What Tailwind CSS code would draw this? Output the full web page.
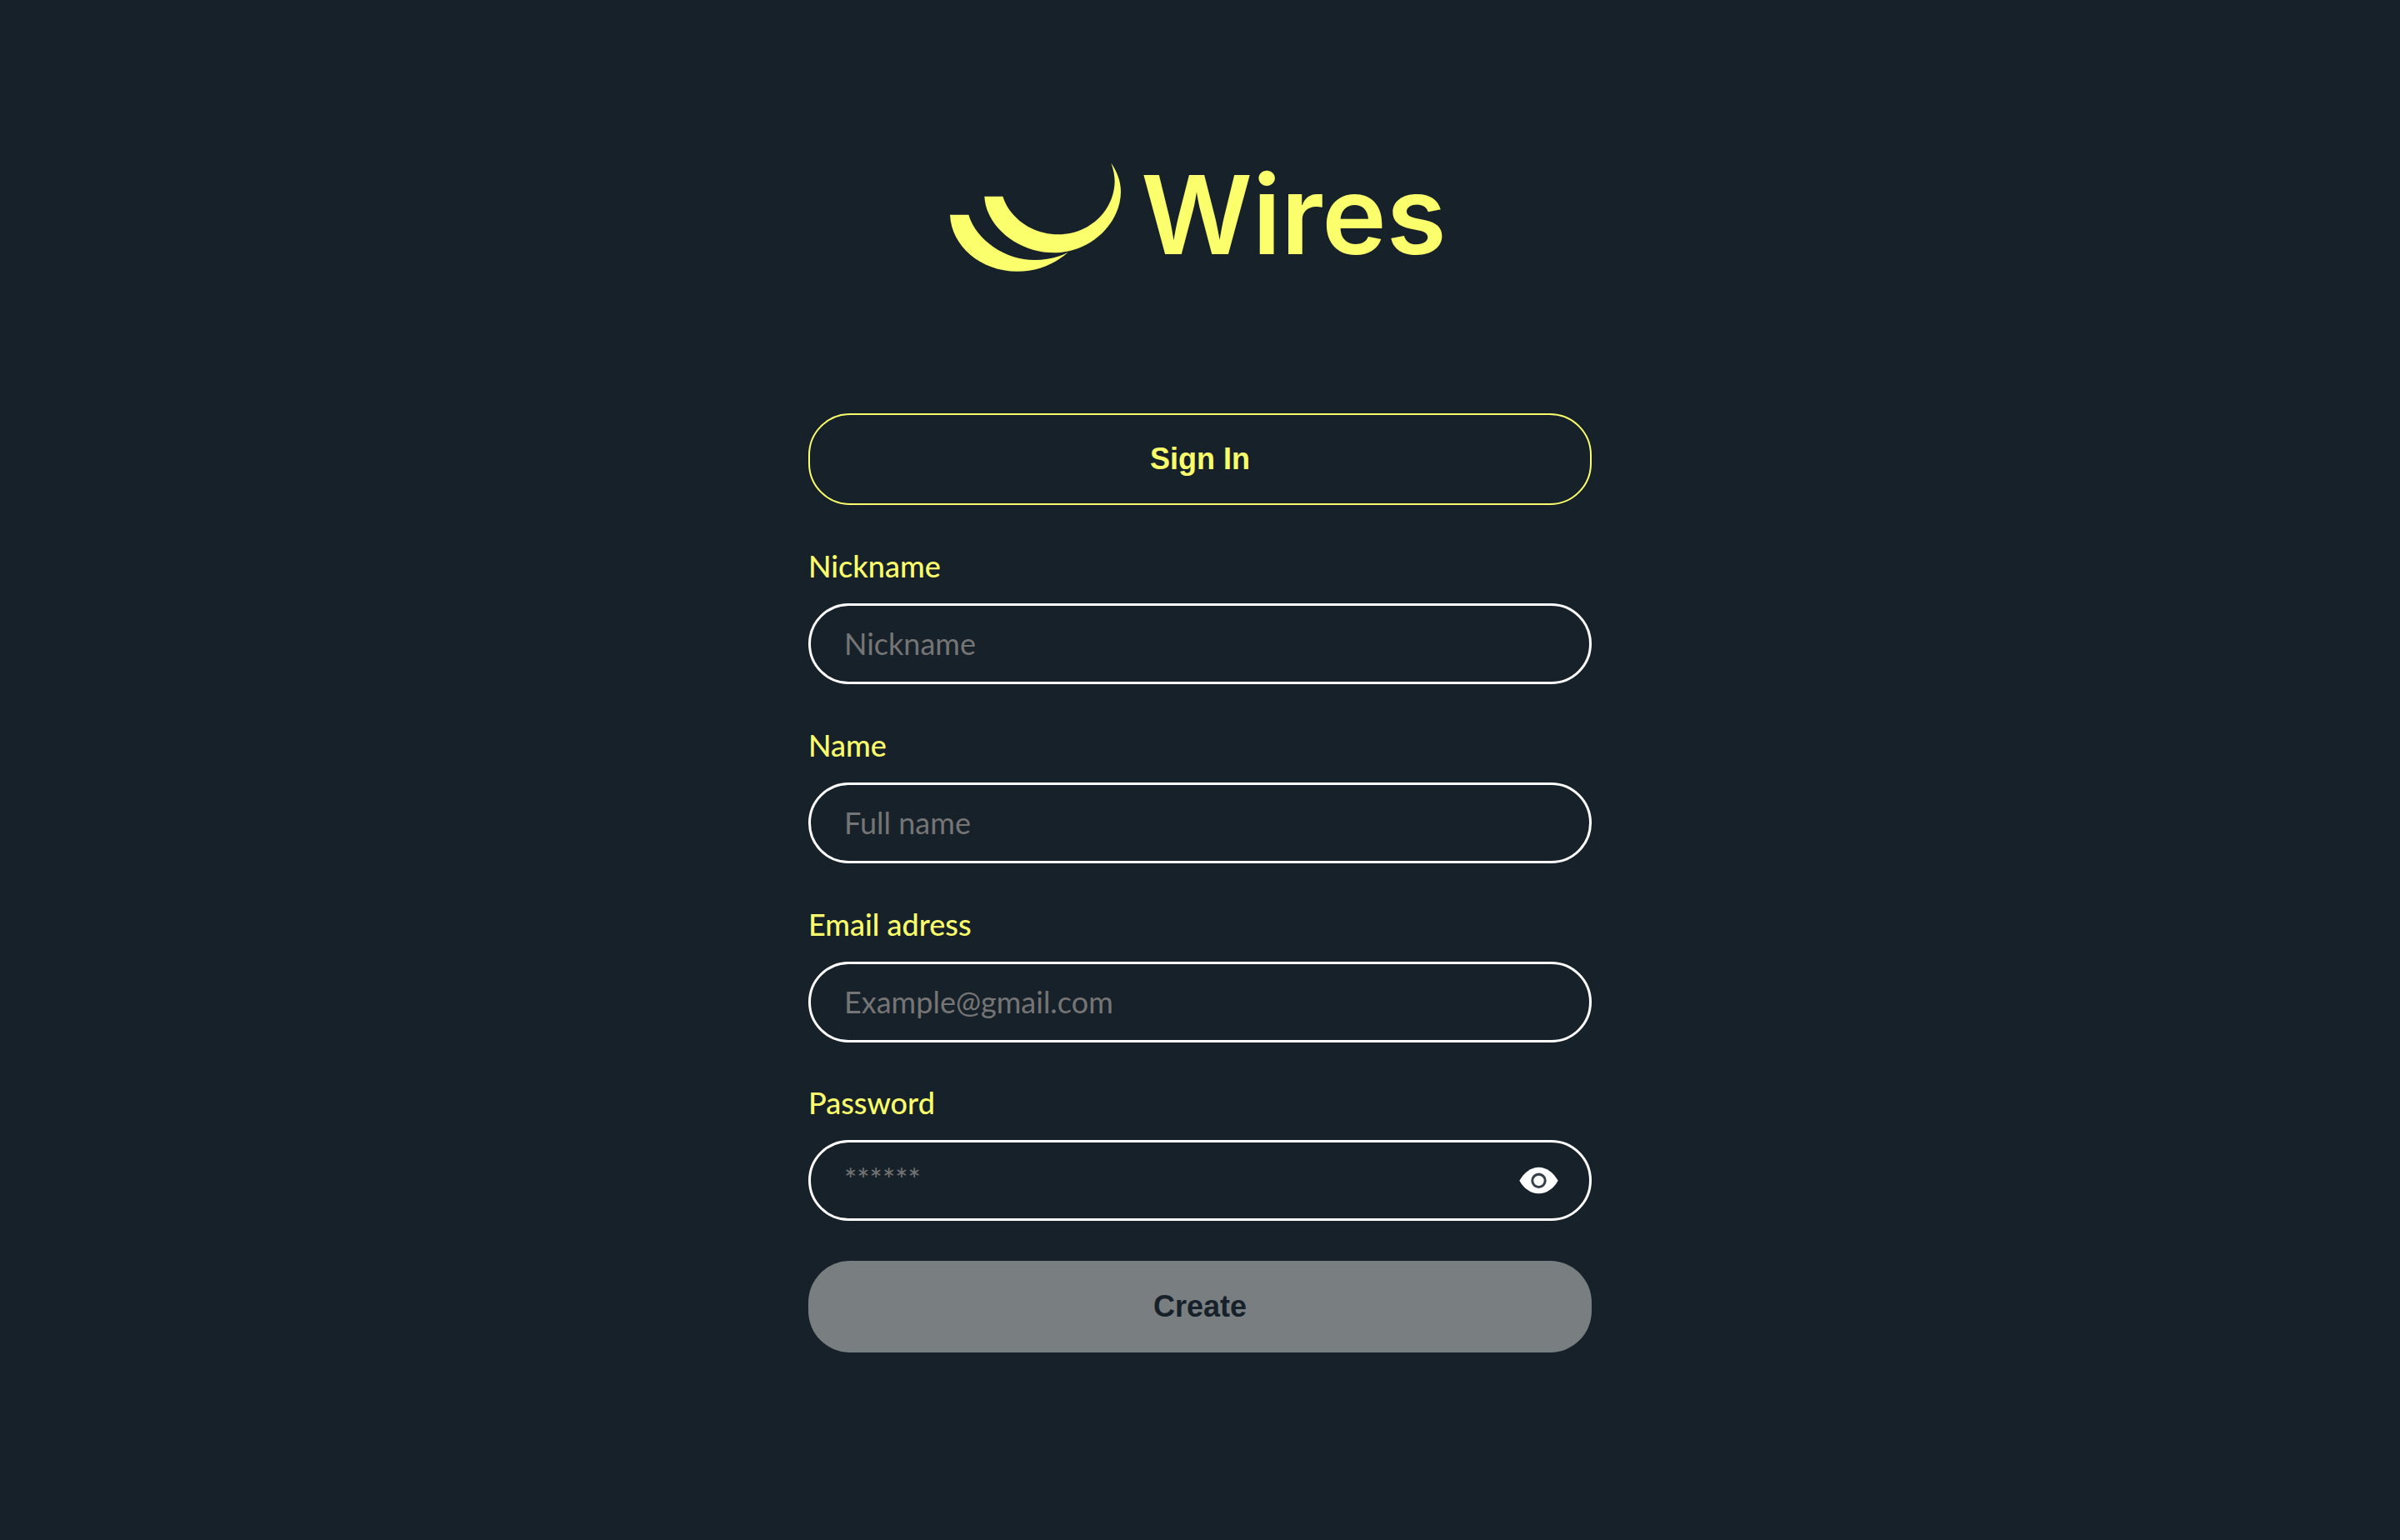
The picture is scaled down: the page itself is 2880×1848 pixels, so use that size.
<!DOCTYPE html>
<html lang="en">
<head>
<meta charset="utf-8">
<meta name="viewport" content="width=device-width, initial-scale=1">
<title>Wires - Create account</title>
<script src="https://cdn.jsdelivr.net/npm/@tailwindcss/browser@4"></script>
</head>
<body class="min-h-screen bg-[#17212a] font-['Lato',sans-serif] text-4xl leading-[43px] text-[#fbff6b]">
<main class="mx-auto flex w-full max-w-[940px] flex-col pt-[195px] pb-24">
  <h1 class="flex h-[131px] items-start justify-center gap-6 pr-1">
    <svg class="h-[131px] w-[205px] shrink-0" viewBox="60 45 615 393" fill="#fbff6b" aria-hidden="true">
      <path d="M184 167H250C275 245 355 304 450 304C555 304 650 225 653 115C653 90 648 70 640 47C660 75 675 110 675 150C675 260 570 370 435 370C310 370 190 280 184 167Z"/>
      <path d="M60 233H127C155 325 260 396 365 396C405 396 450 388 485 368C435 412 375 437 302 437C170 437 65 345 60 233Z"/>
    </svg>
    <span class="font-['Inter',sans-serif] text-[131px] leading-[126px] font-semibold">Wires</span>
  </h1>

  <button type="button" class="mt-[170px] h-[110px] w-full rounded-[50px] border-2 border-[#fbff6b] pb-0.5 font-['Liberation_Sans',Arial,sans-serif] font-bold">Sign In</button>

  <form class="flex flex-col">
    <div class="mt-[52px] flex flex-col gap-[23px]">
      <label for="nickname" class="font-medium">Nickname</label>
      <input id="nickname" type="text" placeholder="Nickname" class="h-[97px] w-full rounded-[50px] border-3 border-white px-10 pb-0.5 text-white placeholder:text-[#757575]">
    </div>
    <div class="mt-[52px] flex flex-col gap-[23px]">
      <label for="name" class="font-medium">Name</label>
      <input id="name" type="text" placeholder="Full name" class="h-[97px] w-full rounded-[50px] border-3 border-white px-10 pb-0.5 text-white placeholder:text-[#757575]">
    </div>
    <div class="mt-[52px] flex flex-col gap-[23px]">
      <label for="email" class="font-medium">Email adress</label>
      <input id="email" type="email" placeholder="Example@gmail.com" class="h-[97px] w-full rounded-[50px] border-3 border-white px-10 pb-0.5 text-white placeholder:text-[#757575]">
    </div>
    <div class="mt-[51px] flex flex-col gap-[23px]">
      <label for="password" class="font-medium">Password</label>
      <div class="flex h-[97px] items-center rounded-[50px] border-3 border-white pr-[37px] pl-10">
        <input id="password" type="password" placeholder="******" class="min-w-0 flex-1 pb-0.5 text-white outline-none placeholder:text-[#757575]">
        <button type="button" aria-label="Show password" class="shrink-0">
          <svg class="h-[33px] w-[47px]" viewBox="130 152 140 98" aria-hidden="true">
            <path fill="#fff" d="M131 202C147 173 172 154 200 154S253 173 269 202C253 231 228 248 200 248S147 231 131 202Z"/>
            <circle cx="200" cy="202" r="23" fill="#fff" stroke="#37404a" stroke-width="9"/>
          </svg>
        </button>
      </div>
    </div>
    <button type="submit" disabled class="mt-12 h-[110px] w-full rounded-[50px] bg-[#797e81] pb-0.5 font-['Liberation_Sans',Arial,sans-serif] font-bold text-[#17212a]">Create</button>
  </form>
</main>
</body>
</html>
